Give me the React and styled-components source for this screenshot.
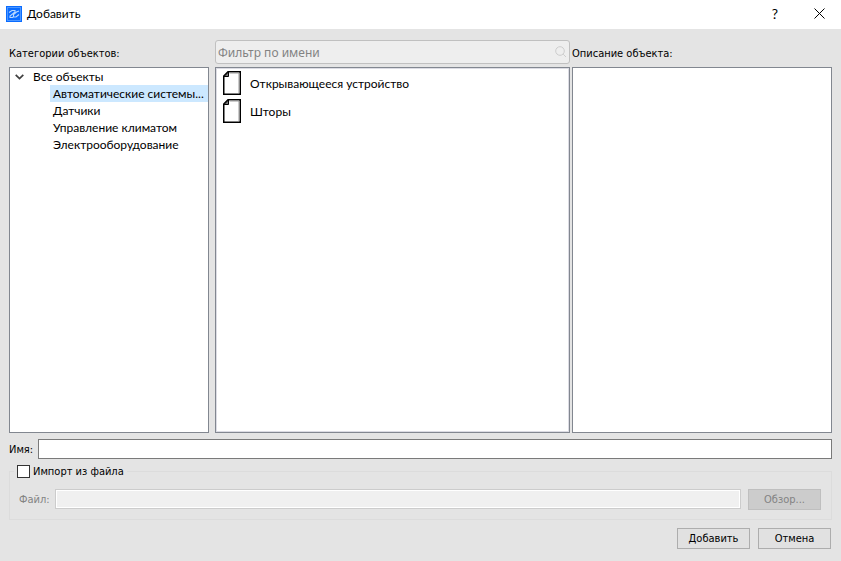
import React, { useState } from "react";
import styled, { createGlobalStyle } from "styled-components";

const categories = [
  "Автоматические системы...",
  "Датчики",
  "Управление климатом",
  "Электрооборудование",
];

const objects = ["Открывающееся устройство", "Шторы"];

const App = () => {
  const [selected, setSelected] = useState(categories[0]);
  const [filter, setFilter] = useState("");
  const [name, setName] = useState("");
  const [importFile, setImportFile] = useState(false);

  const visibleObjects = objects.filter((item) =>
    item.toLowerCase().includes(filter.toLowerCase())
  );

  return (
    <>
      <GlobalStyle />
      <Dialog>
        <TitleBar>
          <LogoIcon />
          <Title>Добавить</Title>
          <TitleButton aria-label="Справка">?</TitleButton>
          <TitleButton aria-label="Закрыть">
            <CloseIcon />
          </TitleButton>
        </TitleBar>

        <Content>
          <Columns>
            <CategoryColumn>
              <ColumnHead>
                <Label as="span">Категории объектов:</Label>
              </ColumnHead>
              <Panel>
                <TreeRoot>
                  <ArrowIcon />
                  Все объекты
                </TreeRoot>
                <TreeList>
                  {categories.map((item) => (
                    <li key={item}>
                      <TreeItem
                        $selected={item === selected}
                        onClick={() => setSelected(item)}
                      >
                        {item}
                      </TreeItem>
                    </li>
                  ))}
                </TreeList>
              </Panel>
            </CategoryColumn>

            <ObjectColumn>
              <ColumnHead>
                <FilterBox>
                  <FilterInput
                    aria-label="Фильтр по имени"
                    placeholder="Фильтр по имени"
                    value={filter}
                    onChange={(e) => setFilter(e.target.value)}
                  />
                  <SearchIcon />
                </FilterBox>
              </ColumnHead>
              <Panel $inset>
                <ObjectList>
                  {visibleObjects.map((item) => (
                    <ObjectItem key={item}>
                      <FileIcon />
                      {item}
                    </ObjectItem>
                  ))}
                </ObjectList>
              </Panel>
            </ObjectColumn>

            <DescriptionColumn>
              <ColumnHead>
                <Label as="span">Описание объекта:</Label>
              </ColumnHead>
              <Panel />
            </DescriptionColumn>
          </Columns>

          <NameRow>
            <Label htmlFor="name">Имя:</Label>
            <TextInput
              id="name"
              value={name}
              onChange={(e) => setName(e.target.value)}
            />
          </NameRow>

          <ImportGroup>
            <ImportLegend>
              <Checkbox
                id="import"
                type="checkbox"
                checked={importFile}
                onChange={(e) => setImportFile(e.target.checked)}
              />
              <Label htmlFor="import">Импорт из файла</Label>
            </ImportLegend>
            <FileRow>
              <FileField>
                <Label htmlFor="file" $disabled={!importFile}>
                  Файл:
                </Label>
                <TextInput id="file" disabled={!importFile} />
              </FileField>
              <Button disabled={!importFile}>Обзор...</Button>
            </FileRow>
          </ImportGroup>

          <Footer>
            <Button>Добавить</Button>
            <Button>Отмена</Button>
          </Footer>
        </Content>
      </Dialog>
    </>
  );
};

export default App;

const LogoIcon = () => (
  <svg width="16" height="16" viewBox="0 0 16 16" fill="none">
    <rect width="16" height="16" fill="#0a6cff" />
    <rect x="1.5" y="1.5" width="13" height="13" stroke="#4d97ff" />
    <path
      d="M3 6.5 6 4.5H9V6L4 10v1.5H6.5L8 10.5M13 5 10.5 6 7.5 8.5V11H10L13 8.5"
      stroke="#b9d8ff"
      strokeWidth="1.1"
    />
  </svg>
);

const CloseIcon = () => (
  <svg width="11" height="11" viewBox="0 0 11 11">
    <path d="M.5.5l10 10M10.5.5l-10 10" stroke="#000" />
  </svg>
);

const ArrowIcon = () => (
  <svg width="9" height="6" viewBox="0 0 9 6" fill="none">
    <path d="M.7.8 4.5 4.6 8.3.8" stroke="#404040" strokeWidth="1.7" />
  </svg>
);

const SearchIcon = () => (
  <svg width="12" height="12" viewBox="0 0 12 12" fill="none" stroke="#cdcdcd">
    <circle cx="5" cy="5" r="4.3" />
    <path d="M8.2 8.2 11 11" />
  </svg>
);

const FileIcon = () => (
  <svg width="18" height="24" viewBox="0 0 18 24">
    <path d="M5 .75H17.25V23.25H.75V5z" fill="#fff" stroke="#000" strokeWidth="1.5" />
    <path d="M5.5 1v4.5H1z" fill="#777" stroke="#000" />
    <path d="M6.5 2h9.5v20" fill="none" stroke="#999" />
  </svg>
);

const GlobalStyle = createGlobalStyle`
  * {
    box-sizing: border-box;
  }

  body {
    margin: 0;
    background-color: #e4e4e4;
    color: #000;
    font-family: Lato, "Noto Sans", sans-serif;
    font-size: 12px;
    line-height: 17px;
  }

  button,
  input {
    font: inherit;
    color: inherit;
  }

  svg {
    display: block;
    flex-shrink: 0;
  }
`;

const Dialog = styled.div`
  display: flex;
  flex-direction: column;
  min-height: 100vh;
`;

const TitleBar = styled.header`
  display: flex;
  align-items: center;
  height: 29px;
  padding: 0 0 2px 6px;
  background-color: #fff;
`;

const Title = styled.h1`
  flex: 1;
  margin: 0;
  padding-left: 5px;
  font-size: 12px;
  font-weight: 400;
`;

const TitleButton = styled.button`
  display: flex;
  align-items: center;
  justify-content: center;
  width: 44px;
  height: 27px;
  padding: 0;
  border: none;
  background: none;
  font-size: 14px;
`;

const Content = styled.main`
  flex: 1;
  display: flex;
  flex-direction: column;
  padding: 8px 9px 12px;
`;

const Columns = styled.div`
  flex: 1;
  display: flex;
  gap: 2px;
`;

const Column = styled.section`
  display: flex;
  flex-direction: column;
  min-width: 0;
`;

const CategoryColumn = styled(Column)`
  flex: 0 0 200px;
  margin-right: 4px;
`;

const ObjectColumn = styled(Column)`
  flex: 355 1 0;
`;

const DescriptionColumn = styled(Column)`
  flex: 260 1 0;
`;

const ColumnHead = styled.div`
  display: flex;
  align-items: center;
  height: 30px;
  padding-top: 3px;
`;

const Label = styled.label`
  color: ${({ $disabled }) => ($disabled ? "#838383" : "#000")};
  font-family: "DejaVu Sans Condensed", "DejaVu Sans", sans-serif;
  font-stretch: condensed;
  font-size: 11px;
`;

const Panel = styled.div`
  flex: 1;
  border: 1px solid #828790;
  background-color: #fff;
  box-shadow: ${({ $inset }) => ($inset ? "inset 0 0 0 1px #dcdce4" : "none")};
`;

const TreeRoot = styled.div`
  display: flex;
  align-items: center;
  gap: 9px;
  height: 17px;
  padding-left: 5px;
`;

const TreeList = styled.ul`
  list-style: none;
  margin: 0;
  padding: 0 0 0 40px;
`;

const TreeItem = styled.button`
  display: block;
  width: 100%;
  height: 17px;
  padding: 0 3px;
  border: none;
  background-color: ${({ $selected }) => ($selected ? "#cce8ff" : "#fff")};
  text-align: left;
  white-space: nowrap;
`;

const FilterBox = styled.div`
  flex: 1;
  align-self: flex-start;
  display: flex;
  align-items: center;
  height: 24px;
  padding: 0 2px;
  border: 1px solid #c0c0c0;
  border-radius: 3px;
  background-color: #eee;
`;

const FilterInput = styled.input`
  flex: 1;
  min-width: 0;
  padding: 0;
  border: none;
  outline: none;
  background: none;
  font-family: "Noto Sans", sans-serif;
  font-size: 12px;

  &::placeholder {
    color: #838383;
  }
`;

const ObjectList = styled.ul`
  list-style: none;
  display: flex;
  flex-direction: column;
  gap: 4px;
  margin: 0;
  padding: 3px 7px;
`;

const ObjectItem = styled.li`
  display: flex;
  align-items: center;
  gap: 9px;
`;

const NameRow = styled.div`
  display: flex;
  align-items: center;
  gap: 5px;
  margin-top: 6px;
`;

const TextInput = styled.input`
  flex: 1;
  min-width: 0;
  height: 20px;
  padding: 0 3px;
  border: 1px solid #7a7a7a;
  border-radius: 0;
  outline: none;
  background-color: #fff;

  &:disabled {
    border-color: #ccc;
    background-color: #f0f0f0;
    box-shadow: inset 0 0 0 1px #fff;
  }
`;

const ImportGroup = styled.fieldset`
  min-width: 0;
  margin: 4px 0 0;
  padding: 9px 10px 9px 4px;
  border: 1px solid #dcdcdc;
`;

const ImportLegend = styled.legend`
  display: flex;
  align-items: center;
  gap: 3px;
  padding: 0 3px;
`;

const Checkbox = styled.input`
  appearance: none;
  display: grid;
  place-items: center;
  width: 13px;
  height: 13px;
  margin: 0;
  border: 1px solid #333;
  background-color: #fff;

  &:checked::before {
    content: "✓";
    font-size: 11px;
    line-height: 11px;
  }
`;

const FileRow = styled.div`
  display: flex;
  align-items: flex-start;
  gap: 7px;
  padding-left: 5px;
`;

const FileField = styled.div`
  flex: 1;
  display: flex;
  align-items: center;
  gap: 5px;
`;

const Button = styled.button`
  width: 73px;
  height: 21px;
  padding: 0;
  border: 1px solid #adadad;
  background-color: #e1e1e1;
  font-family: "DejaVu Sans Condensed", "DejaVu Sans", sans-serif;
  font-stretch: condensed;
  font-size: 11px;

  &:disabled {
    border-color: #bfbfbf;
    background-color: #ccc;
    color: #838383;
  }
`;

const Footer = styled.footer`
  display: flex;
  justify-content: flex-end;
  gap: 8px;
  margin-top: 8px;
  padding-right: 1px;
`;
